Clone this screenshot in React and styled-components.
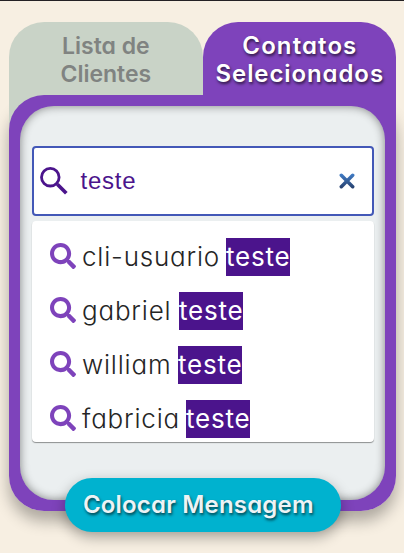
import React from "react";
import styled, { createGlobalStyle } from "styled-components";

const Global = createGlobalStyle`
  * { box-sizing: border-box; }
  html, body { margin: 0; background: #f7efe2; overflow: hidden; }
  body { font-family: Inter, "Open Sans", sans-serif; font-feature-settings: "cv11" 1; }
`;

const Page = styled.main`
  height: 553px;
  border-top: 1px solid #242124;
  padding: 21.4px 8px 0 9px;
  background: #f7efe2;
`;

const Tabs = styled.div`
  position: relative;
  display: grid;
  grid-template-columns: 193.7px 193.3px;
  height: 107.6px;
`;

const Tab = styled.div`
  display: flex;
  flex-direction: column;
  align-items: center;
  padding-top: 9.4px;
  line-height: 28px;
  font-size: ${(p) => (p.$active ? 24 : 23)}px;
  font-weight: 600;
  white-space: nowrap;
  border-radius: 35px 35px 0 0;
  color: ${(p) => (p.$active ? "#fff" : "#808381")};
  background: ${(p) => (p.$active ? "#7e43bb" : "#c9d3c7")};
  text-shadow: ${(p) => (p.$active ? "1px 2px 3px rgba(0,0,0,.65)" : "none")};
`;

const Text = styled.span`
  letter-spacing: ${(p) => p.$spacing || 0}px;
  margin-right: ${(p) => -(p.$spacing || 0)}px;
`;

const Panel = styled.section`
  position: relative;
  height: 416px;
  margin-top: -416px;
  padding: 11px;
  border-radius: 35px 0 35px 35px;
  background: #7e43bb;
`;

const Shade = styled.div`
  height: 416px;
  margin-top: -35px;
  border-radius: 35px;
  box-shadow: 0 10px 15px rgba(0, 0, 0, 0.3);
`;

const Content = styled.div`
  display: flex;
  flex-direction: column;
  height: 394px;
  padding: 40px 11px 0 11.5px;
  border-radius: 34px;
  background: #ebeff0;
  box-shadow: inset 0 0 10px rgba(0, 0, 0, 0.46);
`;

const Search = styled.div`
  display: flex;
  align-items: center;
  height: 70px;
  padding: 1px 17px 0 6px;
  border: 2px solid #4358b7;
  border-radius: 4px;
  background: #fff;
`;

const Query = styled.span`
  flex: 1;
  margin-left: 13px;
  color: #4b148c;
  font: 24px/30px "Liberation Sans", Arial, sans-serif;
  letter-spacing: 0.75px;
`;

const Results = styled.div`
  height: 221px;
  margin-top: 5px;
  padding-top: 9px;
  border-radius: 4px;
  background: #fff;
  box-shadow: 0 1px 1px rgba(0, 0, 0, 0.4);
`;

const Result = styled.div`
  display: flex;
  align-items: center;
  height: 54px;
  padding-left: 18.5px;
  color: #252525;
  font-size: 26px;
  font-weight: 300;
  white-space: nowrap;
`;

const Name = styled.span`
  width: ${(p) => p.$width}px;
  margin-left: 6px;
  line-height: 38px;
  letter-spacing: 0.8px;
`;

const Match = styled.mark`
  width: 64px;
  height: 38px;
  line-height: 38px;
  background: #4b148c;
  color: #fff;
  font-weight: 400;
  letter-spacing: 0.75px;
`;

const Action = styled.button`
  position: absolute;
  left: 56px;
  top: 383px;
  width: 275.5px;
  height: 54px;
  padding: 0 9px 0 0;
  border: 0;
  border-radius: 27px;
  background: #00b2cf;
  color: #edf3f5;
  font: 600 24px/28px Inter, sans-serif;
  font-feature-settings: "cv11" 1;
  white-space: nowrap;
  text-shadow: 1px 2px 3px rgba(0, 0, 0, 0.65);
  box-shadow: 0 5px 14px rgba(0, 0, 0, 0.33);
`;

const Magnifier = () => (
  <svg width="28" height="28" viewBox="0 0 28 28" fill="none" stroke="#4b148c">
    <circle cx="10.3" cy="10.2" r="8.8" strokeWidth="2.8" />
    <path d="M17.3 17.2 L26.3 26.3" strokeWidth="3.7" />
  </svg>
);

const BoldIcon = styled.svg`
  flex: none;
  margin-bottom: 2px;
`;

const BoldMagnifier = () => (
  <BoldIcon width="26" height="26" viewBox="0 0 512 512" fill="#7e43bb">
    <path d="M505 442.700 405.300 343c-4.500-4.500-10.600-7-17-7H372c27.600-35.300 44-79.700 44-128C416 93.100 322.900 0 208 0S0 93.100 0 208s93.100 208 208 208c48.300 0 92.700-16.400 128-44v16.300c0 6.400 2.500 12.500 7 17l99.700 99.700c9.400 9.400 24.600 9.400 33.900 0l28.300-28.300c9.400-9.400 9.400-24.600.1-34zM208 336c-70.700 0-128-57.200-128-128 0-70.700 57.200-128 128-128 70.700 0 128 57.200 128 128 0 70.700-57.200 128-128 128z" />
  </BoldIcon>
);

const Cross = () => (
  <svg width="16" height="16" viewBox="0 0 16 16" fill="none">
    <defs>
      <linearGradient id="cross" x1="0" y1="0" x2="0" y2="16" gradientUnits="userSpaceOnUse">
        <stop stopColor="#4280cc" />
        <stop offset="1" stopColor="#263d68" />
      </linearGradient>
    </defs>
    <path d="M2.300 2.300 13.700 13.700M13.700 2.300 2.300 13.700" stroke="url(#cross)" strokeWidth="3.500" strokeLinecap="round" />
  </svg>
);

const contacts = [
  { name: "cli-usuario", width: 144 },
  { name: "gabriel", width: 97 },
  { name: "william", width: 96 },
  { name: "fabricia", width: 104 },
];

export default function App() {
  return (
    <>
      <Global />
      <Page>
        <Tabs>
          <Tab>
            <Text>Lista de</Text>
            <Text>Clientes</Text>
          </Tab>
          <Tab $active>
            <Text $spacing={1.1}>Contatos</Text>
            <Text $spacing={0.9}>Selecionados</Text>
          </Tab>
        </Tabs>
        <Shade />
        <Panel>
          <Content>
            <Search>
              <Magnifier />
              <Query>teste</Query>
              <Cross />
            </Search>
            <Results>
              {contacts.map((c) => (
                <Result key={c.name}>
                  <BoldMagnifier />
                  <Name $width={c.width}>{c.name}</Name>
                  <Match>teste</Match>
                </Result>
              ))}
            </Results>
          </Content>
          <Action>
            <Text $spacing={0.2}>Colocar Mensagem</Text>
          </Action>
        </Panel>
      </Page>
    </>
  );
}
